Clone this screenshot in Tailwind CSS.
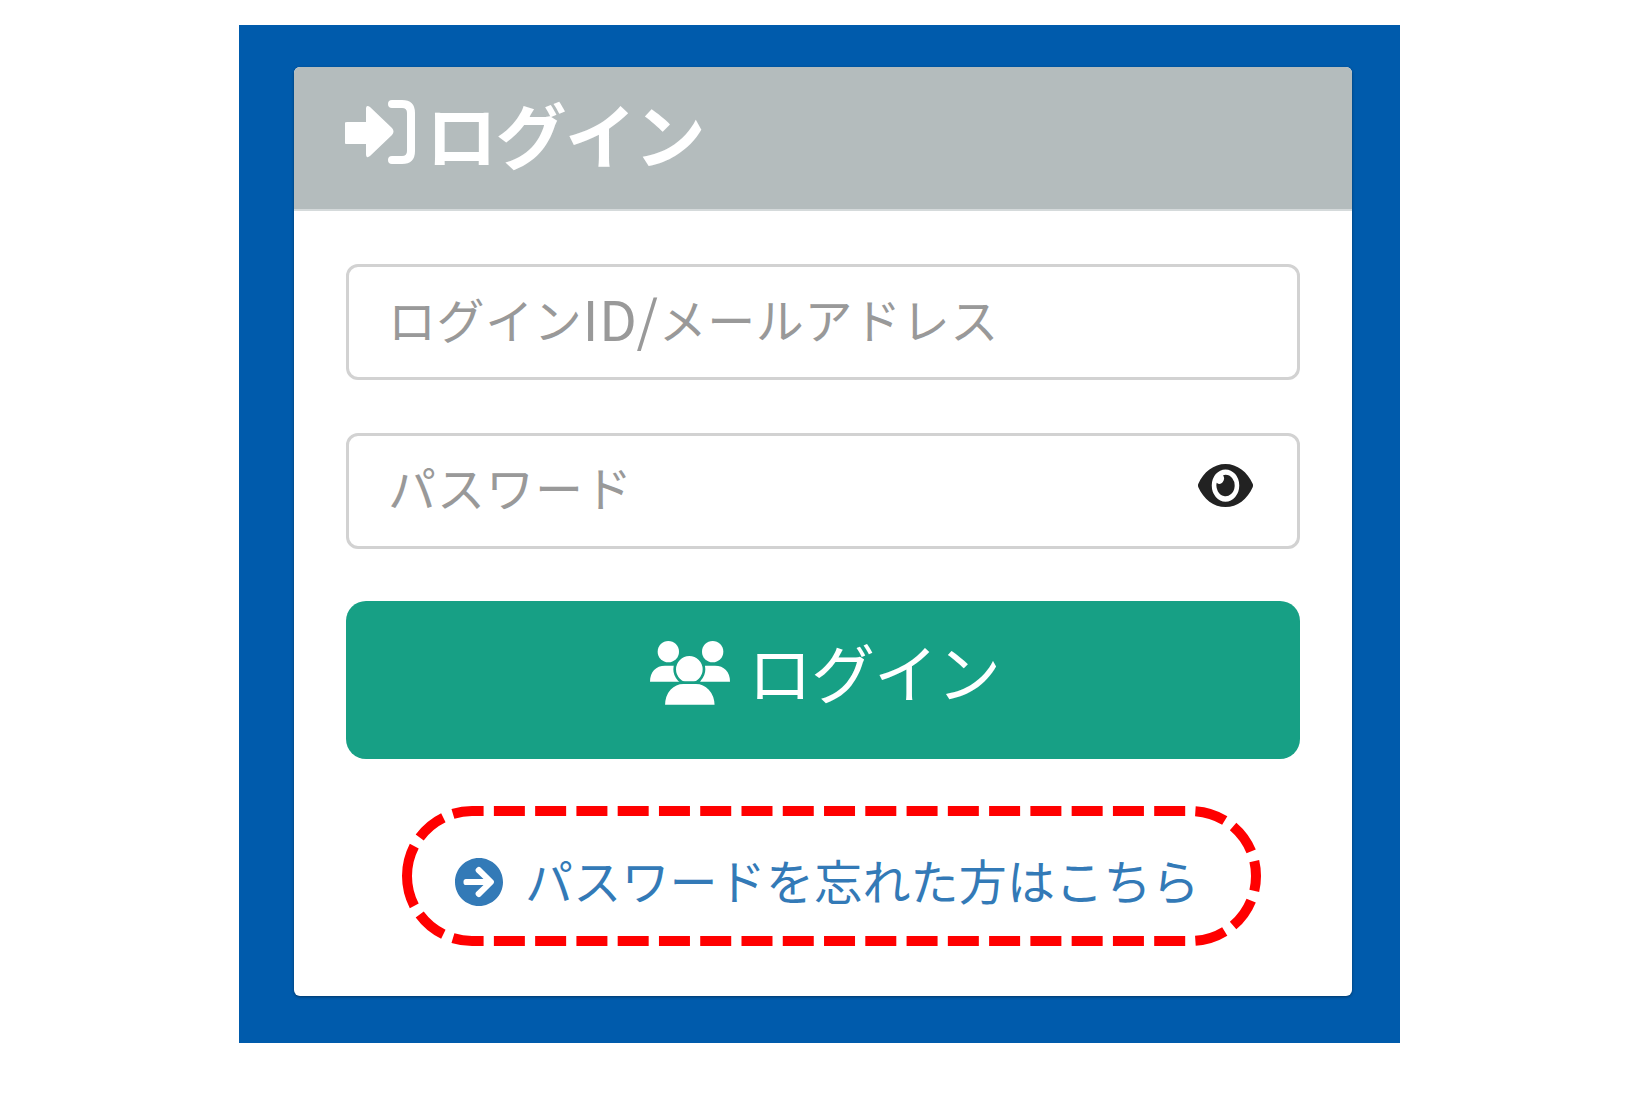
<!DOCTYPE html>
<html lang="ja">

<head>
    <meta charset="UTF-8">
    <title>ログイン</title>
    <script src="https://cdn.jsdelivr.net/npm/@tailwindcss/browser@4"></script>
</head>

<body class="bg-white font-['Noto_Sans_CJK_JP','Noto_Sans',sans-serif]">
    <main class="ml-[239px] mt-[25px] w-[1161px] h-[1018px] bg-[#005bac] pt-[42px] pl-[55px]">
        <div class="w-[1058px] h-[929px] bg-white rounded-[6px] overflow-hidden shadow-[0_1px_3px_rgba(0,0,0,0.4)]">
            <!-- header -->
            <div class="h-[144px] bg-[#b4bcbd] border-b-2 border-[#d5dadb] flex items-center pl-[51px] pb-[12px] text-white">
                <svg class="w-[70px] h-[64px] shrink-0" viewBox="0 0 70 64">
                    <path fill="#fff" d="M2 25q-3 0-3 3v16q0 3 3 3h19v10q0 5 4 2l22-21q3-3.500 0-7L25 10q-4-3-4 2v13z" transform="translate(0 -3)" />
                    <path fill="none" stroke="#fff" stroke-width="8" stroke-linecap="round" d="M47 4h10q9 0 9 9v38q0 9-9 9H47" />
                </svg>
                <h1 class="ml-[11px] text-[71px] leading-none font-semibold tracking-[-1.5px]">ログイン</h1>
            </div>

            <!-- form -->
            <div class="px-[52px] pt-[53px]">
                <div class="h-[116px] rounded-[12px] border-[3px] border-[#d2d2d2] flex items-center pl-[39px] pb-[9px] text-[48px] text-[#999] whitespace-pre tracking-[0.6px]">ログイン<span class="text-[55px] leading-none">ID/</span>メールアドレス</div>
                <div class="mt-[53px] h-[116px] rounded-[12px] border-[3px] border-[#d2d2d2] flex items-center justify-between pl-[39px] pr-[44px] pb-[11px] text-[48px] text-[#999] tracking-[1px]">
                    <span>パスワード</span>
                    <svg class="w-[55px] h-[43px] mt-[-1px]" viewBox="0 64 576 384" preserveAspectRatio="none">
                        <path fill="#222" d="M572.52 241.4C518.29 135.59 410.93 64 288 64S57.68 135.64 3.48 241.41a32.35 32.35 0 0 0 0 29.19C57.71 376.41 165.07 448 288 448s230.32-71.64 284.52-177.41a32.35 32.35 0 0 0 0-29.19zM288 400a144 144 0 1 1 144-144 143.93 143.93 0 0 1-144 144zm0-240a95.31 95.31 0 0 0-25.31 3.79 47.85 47.85 0 0 1-66.9 66.9A95.78 95.78 0 1 0 288 160z" />
                    </svg>
                </div>

                <button class="mt-[52px] w-full h-[158px] rounded-[20px] bg-[#17a085] text-white flex items-center justify-center pb-[8px] pl-[4px]">
                    <svg class="w-[80px] h-[65px] shrink-0 mt-[-6px]" viewBox="0 0 240 195">
                        <circle cx="55" cy="32" r="32" fill="#fff" />
                        <circle cx="188" cy="32" r="32" fill="#fff" />
                        <path fill="#fff" d="M0 122C0 92 18 74 45 74h30L90 122z" />
                        <path fill="#fff" d="M240 122C240 92 222 74 195 74h-30L150 122z" />
                        <circle cx="118" cy="85" r="44" fill="#fff" stroke="#17a085" stroke-width="8" />
                        <path fill="#fff" stroke="#17a085" stroke-width="8" d="M41 195C41 150 70 125 100 125h38c30 0 60 25 60 70z" />
                    </svg>
                    <span class="ml-[18px] mb-[13px] text-[64px] leading-none tracking-[-1px]">ログイン</span>
                </button>

                <!-- forgot password link -->
                <div class="relative mt-[47px] ml-[56px] w-[859px] h-[140px] flex items-center pl-[53px] text-[#337ab7]">
                    <svg class="absolute left-0 top-0 w-[859px] h-[140px]" viewBox="0 0 859 140" fill="none" stroke="#f00" stroke-width="10" stroke-dasharray="31 10.27">
                        <path d="M5 70A65 65 0 0 1 70 5H789A65 65 0 0 1 854 70" />
                        <path d="M5 70A65 65 0 0 0 70 135H789A65 65 0 0 0 854 70" />
                    </svg>
                    <svg class="w-[48px] h-[48px] shrink-0 mt-[12px]" viewBox="8 8 496 496">
                        <path fill="#337ab7" d="M256 8c137 0 248 111 248 248S393 504 256 504 8 393 8 256 119 8 256 8zm-28.900 143.600l75.500 72.400H120c-13.300 0-24 10.700-24 24v16c0 13.300 10.700 24 24 24h182.600l-75.500 72.400c-9.700 9.300-9.900 24.800-.4 34.300l11 10.900c9.400 9.400 24.600 9.400 33.900 0L404.300 273c9.400-9.400 9.400-24.600 0-33.900L271.600 106.300c-9.400-9.400-24.600-9.400-33.900 0l-11 10.900c-9.300 9.600-9.100 25.100.4 34.400z" />
                    </svg>
                    <a href="#" class="ml-[22px] mt-[5px] text-[48px] leading-none whitespace-nowrap tracking-[0.2px]">パスワードを忘れた方はこちら</a>
                </div>
            </div>
        </div>
    </main>
</body>

</html>
